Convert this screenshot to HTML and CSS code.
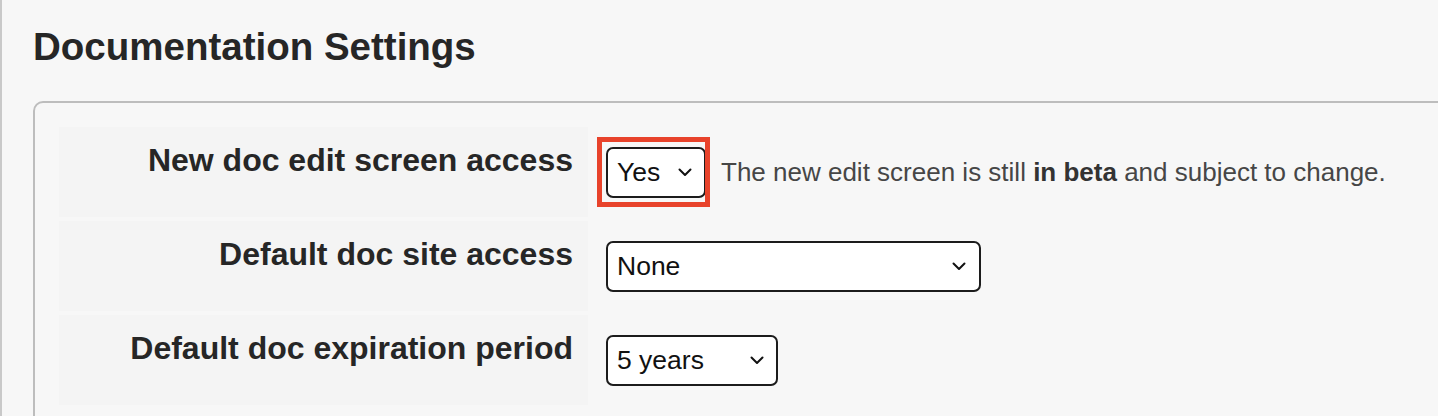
FILE: index.html
```html
<!DOCTYPE html>
<html lang="en">
<head>
<meta charset="utf-8">
<title>Documentation Settings</title>
<link rel="stylesheet" href="styles.css">
</head>
<body>
  <main class="page">
    <h1 class="title">Documentation Settings</h1>
    <section class="panel">
      <div class="settings">
        <div class="label">New doc edit screen access</div>
        <div class="value">
          <div class="select-wrap">
            <div class="select select-yes">
              <span>Yes</span>
              <svg class="chev" viewBox="0 0 14 9" width="14" height="9"><polyline points="1.5,1.5 7,7 12.5,1.5"/></svg>
            </div>
            <div class="highlight"></div>
          </div>
          <p class="hint">The new edit screen is still <b>in beta</b> and subject to change.</p>
        </div>

        <div class="label">Default doc site access</div>
        <div class="value">
          <div class="select-wrap">
            <div class="select select-none">
              <span>None</span>
              <svg class="chev" viewBox="0 0 14 9" width="14" height="9"><polyline points="1.5,1.5 7,7 12.5,1.5"/></svg>
            </div>
          </div>
        </div>

        <div class="label">Default doc expiration period</div>
        <div class="value">
          <div class="select-wrap">
            <div class="select select-years">
              <span>5 years</span>
              <svg class="chev" viewBox="0 0 14 9" width="14" height="9"><polyline points="1.5,1.5 7,7 12.5,1.5"/></svg>
            </div>
          </div>
        </div>
      </div>
    </section>
  </main>
</body>
</html>
```
FILE: styles.css
```css
html, body {
  margin: 0;
  padding: 0;
}

body {
  background: #f7f7f7;
  border-left: 2px solid #c9c9c9;
  min-height: 100vh;
  box-sizing: border-box;
  overflow: hidden;
  font-family: "Liberation Sans", Arial, Helvetica, sans-serif;
  color: #262626;
}

.page {
  padding: 25px 0 0 31px;
}

.title {
  margin: 0 0 32px 0;
  font-size: 38.5px;
  line-height: 44px;
  font-weight: 700;
  color: #262626;
}

.panel {
  border: 2px solid #bdbdbd;
  border-radius: 10px;
  margin-right: -60px;
  padding: 24px 24px 24px 24px;
  background: #f7f7f7;
}

.settings {
  display: grid;
  grid-template-columns: 529px 1fr;
  row-gap: 4px;
}

.label {
  background: #f4f4f4;
  min-height: 90px;
  box-sizing: border-box;
  padding: 15px 15px 0 0;
  text-align: right;
  font-size: 32px;
  line-height: 37px;
  font-weight: 700;
  color: #262626;
}

.value {
  display: flex;
  align-items: center;
  align-self: start;
  padding: 19.5px 0 0 18px;
}

.select-wrap {
  position: relative;
  flex: none;
}

.select {
  display: flex;
  align-items: center;
  justify-content: space-between;
  height: 51px;
  box-sizing: border-box;
  border: 2px solid #1c1c1c;
  border-radius: 7px;
  background: #ffffff;
  padding: 0 12px 0 9px;
  font-size: 26.5px;
  color: #111111;
}

.select-yes { width: 100px; }
.select-none { width: 375px; padding-right: 13px; }
.select-years { width: 172px; }

.chev {
  display: block;
  fill: none;
  stroke: #111111;
  stroke-width: 2;
  stroke-linecap: round;
  stroke-linejoin: round;
}

.highlight {
  position: absolute;
  left: -9px;
  top: -9.5px;
  width: 113px;
  height: 70px;
  box-sizing: border-box;
  border: 5px solid #e8432b;
  pointer-events: none;
}

.hint {
  margin: 0 0 0 15px;
  font-size: 26px;
  line-height: 30px;
  color: #464646;
}

.hint b {
  color: #333333;
}
```
